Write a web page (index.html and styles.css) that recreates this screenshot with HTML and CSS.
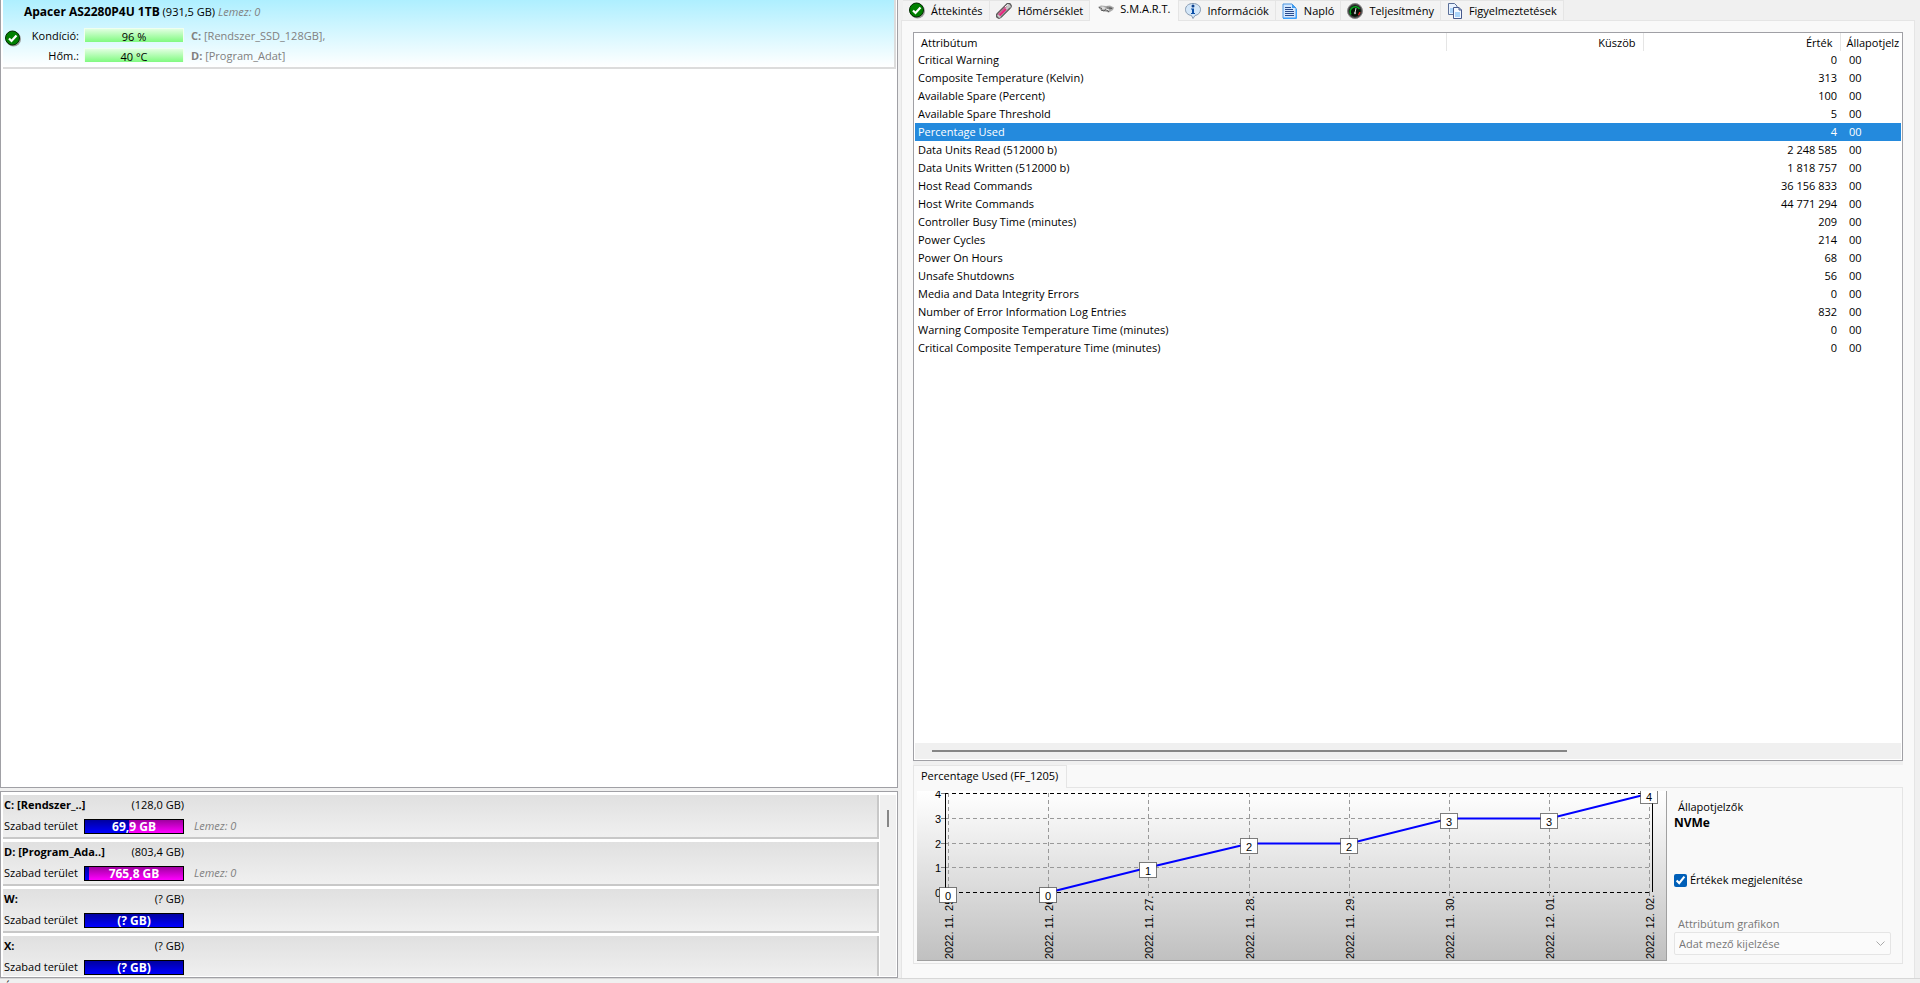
FILE: index.html
```
<!DOCTYPE html>
<html lang="hu">
<head>
    <meta charset="UTF-8">
    <meta name="viewport" content="width=device-width, initial-scale=1.0">
    <title>Apacer AS2280P4U 1TB - S.M.A.R.T.</title>
    <link rel="stylesheet" href="styles.css">
</head>
<body>
    <div class="main">
        <!-- Disks and partitions -->
        <aside class="sidebar">
            <div class="disk-list">
                <div class="disk">
                    <div class="disk-title"><b>Apacer AS2280P4U 1TB</b> <span>(931,5 GB)</span> <i>Lemez: 0</i></div>
                    <div class="disk-body">
                        <svg class="disk-status" width="16" height="17" viewBox="0 0 16 17">
                            <circle cx="8.500" cy="9" r="7.500" fill="#999"/>
                            <circle cx="7.500" cy="8" r="7" fill="#008000" stroke="#012b01"/>
                            <path d="M4 8.500l2.500 2.500 5-5.500" fill="none" stroke="#fff" stroke-width="2.200"/>
                        </svg>
                        <div class="disk-stats">
                            <div class="disk-stat">
                                <span class="disk-label">Kondíció:</span>
                                <span class="disk-bar">96 %</span>
                                <span class="disk-volume"><b>C:</b> [Rendszer_SSD_128GB],</span>
                            </div>
                            <div class="disk-stat">
                                <span class="disk-label">Hőm.:</span>
                                <span class="disk-bar">40 °C</span>
                                <span class="disk-volume"><b>D:</b> [Program_Adat]</span>
                            </div>
                        </div>
                    </div>
                </div>
            </div>

            <div class="partition-list">
                <div class="partitions">
                    <div class="partition">
                        <div class="partition-head"><b>C: [Rendszer_..]</b><span>(128,0 GB)</span></div>
                        <div class="partition-row">
                            <span class="partition-label">Szabad terület</span>
                            <span class="space-bar"><span class="space-used" style="width: 45%"></span><b>69,9 GB</b></span>
                            <i>Lemez: 0</i>
                        </div>
                    </div>
                    <div class="partition">
                        <div class="partition-head"><b>D: [Program_Ada..]</b><span>(803,4 GB)</span></div>
                        <div class="partition-row">
                            <span class="partition-label">Szabad terület</span>
                            <span class="space-bar"><span class="space-used" style="width: 4%"></span><b>765,8 GB</b></span>
                            <i>Lemez: 0</i>
                        </div>
                    </div>
                    <div class="partition">
                        <div class="partition-head"><b>W:</b><span>(? GB)</span></div>
                        <div class="partition-row">
                            <span class="partition-label">Szabad terület</span>
                            <span class="space-bar"><span class="space-used" style="width: 100%"></span><b>(? GB)</b></span>
                        </div>
                    </div>
                    <div class="partition">
                        <div class="partition-head"><b>X:</b><span>(? GB)</span></div>
                        <div class="partition-row">
                            <span class="partition-label">Szabad terület</span>
                            <span class="space-bar"><span class="space-used" style="width: 100%"></span><b>(? GB)</b></span>
                        </div>
                    </div>
                </div>
                <div class="scroll-v"><div class="scroll-v-thumb"></div></div>
            </div>
        </aside>

        <!-- Details of the selected disk -->
        <main class="details">
            <div class="tabs" role="tablist">
                <button class="tab" role="tab">
                    <svg width="16" height="17" viewBox="0 0 16 17">
                        <circle cx="8.500" cy="9" r="7.500" fill="#999"/>
                        <circle cx="7.500" cy="8" r="7" fill="#008000" stroke="#012b01"/>
                        <path d="M4 8.500l2.500 2.500 5-5.500" fill="none" stroke="#fff" stroke-width="2.200"/>
                    </svg>
                    Áttekintés
                </button>
                <button class="tab" role="tab">
                    <svg width="16" height="16" viewBox="0 0 16 16">
                        <path d="M3 12.500L12.500 3" stroke="#5a5a5a" stroke-width="6.500" stroke-linecap="round"/>
                        <path d="M3.500 12.500L12.500 3.500" stroke="#c8c8c8" stroke-width="4.500" stroke-linecap="round"/>
                        <path d="M2 11.500L10.500 3" stroke="#c06088" stroke-width="1.500"/>
                        <path d="M3.500 12.500L10 6" stroke="#e8207c" stroke-width="2"/>
                        <path d="M5 14L14 5" stroke="#666" stroke-width="1.200"/>
                        <path d="M9 4l3-2.500" stroke="#fff"/>
                    </svg>
                    Hőmérséklet
                </button>
                <button class="tab active" role="tab" aria-selected="true">
                    <svg width="16" height="16" viewBox="0 0 16 16">
                        <path d="M0 6l3-1.500 5 .5 4-.5 4 2-1 2.500-4 2.500-4-1-4-1z" fill="#aaa"/>
                        <path d="M1 6l4-.5 3 1.500-2 1.500-4-1z" fill="#ddd"/>
                        <path d="M9 5.500l4 .5 2 1.500-3 1-4-1z" fill="#888"/>
                        <path d="M3 9l3 1 2-1.500 3 2.500M1 6.500l3 1M11 7l3 .5" fill="none" stroke="#555"/>
                        <path d="M8 8l3 1" stroke="#eee"/>
                    </svg>
                    S.M.A.R.T.
                </button>
                <button class="tab" role="tab">
                    <svg width="16" height="16" viewBox="0 0 16 16">
                        <path d="M8 .5c4.500 0 7.500 2.600 7.500 6s-2.500 5.500-5.500 6l-2 3-1.500-3C3 12 .5 10 .5 6.500s3-6 7.500-6z" fill="#d3e6f8" stroke="#8599b0"/>
                        <circle cx="8" cy="3" r="1.500" fill="#0b3f8c"/>
                        <path d="M6 5.500h3v4.500h1v1H6v-1h1V6.500H6z" fill="#0b4fa8"/>
                    </svg>
                    Információk
                </button>
                <button class="tab" role="tab">
                    <svg width="16" height="16" viewBox="0 0 16 16">
                        <path d="M2 1h8l4 4v10H1V1z" fill="#d3e8ff" stroke="#4a94e0"/>
                        <path d="M10 1v4h4z" fill="#3f9cf0"/>
                        <path d="M3 4.500h6M3 6.500h8M3 8.500h9M3 10.500h9M3 12.500h9" stroke="#2a4a8c"/>
                        <path d="M1 15.500h13.500V6" fill="none" stroke="#38a0ff"/>
                    </svg>
                    Napló
                </button>
                <button class="tab" role="tab">
                    <svg width="16" height="16" viewBox="0 0 16 16">
                        <circle cx="8" cy="8" r="7.500" fill="#444" stroke="#888"/>
                        <circle cx="8" cy="8" r="5.800" fill="#061206"/>
                        <path d="M4 11.500A5 5 0 1 1 12.500 6" fill="none" stroke="#08a020" stroke-width="1.500"/>
                        <path d="M12.800 9a5 5 0 0 1-1.500 3" fill="none" stroke="#e02020" stroke-width="1.500"/>
                        <path d="M8 10l1-5" stroke="#ddd"/>
                        <circle cx="8" cy="10" r="1.200" fill="#aaa"/>
                    </svg>
                    Teljesítmény
                </button>
                <button class="tab" role="tab">
                    <svg width="16" height="16" viewBox="0 0 16 16">
                        <path d="M1.500.5h6l2.500 2.500v8.500H1.500z" fill="#e9f3ff" stroke="#5b6f98"/>
                        <path d="M3 5h4v5H3z" fill="#a9d4fa"/>
                        <path d="M6.500 4.500H12l2.500 2.500v8.500h-8z" fill="#f4f9ff" stroke="#46598c"/>
                        <path d="M12 4.500v2.500h2.500" fill="none" stroke="#46598c"/>
                        <path d="M8 9h5v5H8z" fill="#a9d4fa"/>
                    </svg>
                    Figyelmeztetések
                </button>
            </div>

            <div class="tab-page">
                <div class="smart-list">
                    <table class="smart-table">
                        <colgroup>
                            <col>
                            <col class="col-value">
                            <col class="col-value">
                            <col class="col-flags">
                        </colgroup>
                        <thead>
                            <tr><th>Attribútum</th><th>Küszöb</th><th>Érték</th><th>Állapotjelz</th></tr>
                        </thead>
                        <tbody>
                            <tr><td>Critical Warning</td><td></td><td>0</td><td>00</td></tr>
                            <tr><td>Composite Temperature (Kelvin)</td><td></td><td>313</td><td>00</td></tr>
                            <tr><td>Available Spare (Percent)</td><td></td><td>100</td><td>00</td></tr>
                            <tr><td>Available Spare Threshold</td><td></td><td>5</td><td>00</td></tr>
                            <tr class="selected"><td>Percentage Used</td><td></td><td>4</td><td>00</td></tr>
                            <tr><td>Data Units Read (512000 b)</td><td></td><td>2 248 585</td><td>00</td></tr>
                            <tr><td>Data Units Written (512000 b)</td><td></td><td>1 818 757</td><td>00</td></tr>
                            <tr><td>Host Read Commands</td><td></td><td>36 156 833</td><td>00</td></tr>
                            <tr><td>Host Write Commands</td><td></td><td>44 771 294</td><td>00</td></tr>
                            <tr><td>Controller Busy Time (minutes)</td><td></td><td>209</td><td>00</td></tr>
                            <tr><td>Power Cycles</td><td></td><td>214</td><td>00</td></tr>
                            <tr><td>Power On Hours</td><td></td><td>68</td><td>00</td></tr>
                            <tr><td>Unsafe Shutdowns</td><td></td><td>56</td><td>00</td></tr>
                            <tr><td>Media and Data Integrity Errors</td><td></td><td>0</td><td>00</td></tr>
                            <tr><td>Number of Error Information Log Entries</td><td></td><td>832</td><td>00</td></tr>
                            <tr><td>Warning Composite Temperature Time (minutes)</td><td></td><td>0</td><td>00</td></tr>
                            <tr><td>Critical Composite Temperature Time (minutes)</td><td></td><td>0</td><td>00</td></tr>
                        </tbody>
                    </table>
                    <div class="scroll-h"><div class="scroll-h-thumb"></div></div>
                </div>

                <div class="history">
                    <div class="history-tabs" role="tablist">
                        <button class="history-tab" role="tab" aria-selected="true">Percentage Used (FF_1205)</button>
                    </div>
                    <div class="history-page">
                        <div class="chart">
                            <svg id="chart" viewBox="0 0 749 169"></svg>
                        </div>
                        <div class="options">
                            <div class="options-title">Állapotjelzők</div>
                            <b>NVMe</b>
                            <label class="check"><input type="checkbox" checked>Értékek megjelenítése</label>
                            <label class="graph-label" for="graphType">Attribútum grafikon</label>
                            <div class="graph-select">
                                <select id="graphType" disabled>
                                    <option>Adat mező kijelzése</option>
                                </select>
                                <svg width="9" height="5" viewBox="0 0 9 5"><path d="M.5 .5l4 4 4-4" fill="none" stroke="#aaa"/></svg>
                            </div>
                        </div>
                    </div>
                </div>
            </div>
        </main>
    </div>

    <footer class="status-bar">Á</footer>

    <script src="chart.js"></script>
</body>
</html>
```
FILE: styles.css
```
* {
    box-sizing: border-box;
}

body {
    margin: 0;
    height: 100vh;
    display: flex;
    flex-direction: column;
    overflow: hidden;
    background-color: #f0f0f0;
    color: #000;
    font-family: "Open Sans", "Noto Sans", sans-serif;
    font-size: 11px;
    line-height: 16px;
}

button,
select {
    font: inherit;
    color: inherit;
}

i {
    color: #808080;
}

.main {
    flex: 1;
    min-height: 0;
    display: flex;
    gap: 3px;
}

/* Left side */
.sidebar {
    flex: 0 0 898px;
    max-width: 50%;
    display: flex;
    flex-direction: column;
    gap: 3px;
}

.disk-list {
    flex: 1;
    min-height: 0;
    padding: 0 1px 0 2px;
    background-color: #fff;
    border: 1px solid #a0a0a5;
    border-top: none;
}

.disk {
    height: 69px;
    padding-top: 4px;
    background: linear-gradient(#aeefff, #fff);
    border: 2px solid #dcdcdc;
    border-width: 0 2px 2px 0;
}

.disk-title {
    padding-left: 21px;
}

.disk-title b {
    font-size: 12px;
}

.disk-body {
    display: flex;
    align-items: flex-start;
    padding: 6px 0 0 2px;
}

.disk-status {
    margin-top: 4px;
}

.disk-stats {
    flex: 1;
}

.disk-stat {
    display: flex;
    line-height: 20px;
}

.disk-label {
    width: 58px;
    text-align: right;
}

.disk-bar {
    width: 100px;
    height: 14px;
    margin: 2px 7px 4px 5px;
    border: 1px solid #f0fff0;
    border-bottom: none;
    background: linear-gradient(#e0ffe0, #80fa80);
    line-height: 15px;
    text-align: center;
}

.disk-volume {
    color: #808080;
}

.partition-list {
    flex: 0 0 187px;
    display: flex;
    overflow: hidden;
    padding: 3px 1px 1px 2px;
    background-color: #fff;
    border: 1px solid #a0a0a5;
}

.partitions {
    flex: 1;
    display: flex;
    flex-direction: column;
    gap: 3px;
    overflow: hidden;
}

.partition {
    flex: 0 0 44px;
    padding: 2px 0 0 1px;
    background: linear-gradient(#e0e0e0, #f0f0f0);
    border: 2px solid #c8c8c8;
    border-width: 0 2px 2px 0;
}

.partition-head {
    display: flex;
    justify-content: space-between;
    width: 180px;
}

.partition-row {
    display: flex;
    align-items: center;
    padding-top: 5px;
}

.partition-row i {
    margin-left: 10px;
}

.partition-label {
    width: 80px;
    white-space: nowrap;
}

.space-bar {
    position: relative;
    width: 100px;
    height: 15px;
    border: 1px solid #000;
    background: linear-gradient(#a000a0, #ff00ff);
    color: #fff;
    font-size: 12px;
    line-height: 14px;
    text-align: center;
}

.space-used {
    position: absolute;
    top: 0;
    left: 0;
    height: 100%;
    background: linear-gradient(#0000a0, #0000ff);
}

.space-bar b {
    position: relative;
}

.scroll-v {
    width: 16px;
    margin-left: 1px;
    padding: 15px 7px 0;
    background-color: #f0f0f0;
}

.scroll-v-thumb {
    width: 2px;
    height: 17px;
    background-color: #868686;
}

/* Right side */
.details {
    flex: 1;
    min-width: 0;
    display: flex;
    flex-direction: column;
    padding-right: 5px;
}

.tabs {
    display: flex;
    height: 20px;
    padding-left: 2px;
}

.tab {
    display: flex;
    align-items: center;
    gap: 6px;
    padding: 0 6px 0 6px;
    background-color: #f3f3f3;
    border: 1px solid #e5e5e5;
    border-width: 1px 1px 0 0;
    white-space: nowrap;
}

.tab.active {
    height: 21px;
    margin-bottom: -1px;
    padding: 0 8px 4px 8px;
    background-color: #f9f9f9;
    border-top: none;
    z-index: 1;
}

.tab-page {
    flex: 1;
    min-height: 0;
    display: flex;
    flex-direction: column;
    padding: 11px 11px 14px;
    background-color: #f9f9f9;
    border: 1px solid #e5e5e5;
    border-bottom: none;
}

.smart-list {
    flex: 1;
    min-height: 0;
    display: flex;
    flex-direction: column;
    justify-content: space-between;
    padding: 0 1px 1px;
    background-color: #fff;
    border: 1px solid #a0a0a5;
}

.smart-table {
    width: 100%;
    table-layout: fixed;
    border-collapse: collapse;
}

.col-value {
    width: 197px;
}

.col-flags {
    width: 61px;
}

.smart-table th {
    height: 18px;
    padding: 1px 7px 0 6px;
    border-right: 1px solid #e5e5e5;
    font-weight: normal;
    text-align: left;
    white-space: nowrap;
}

.smart-table th:last-child {
    padding-right: 0;
    border-right: none;
}

.smart-table td {
    height: 18px;
    padding: 0 3px;
    white-space: nowrap;
}

.smart-table th:nth-child(2),
.smart-table th:nth-child(3),
.smart-table td:nth-child(3) {
    text-align: right;
}

.smart-table td:last-child {
    padding-left: 9px;
}

.smart-table .selected {
    background-color: #248add;
    color: #fff;
}

.scroll-h {
    height: 16px;
    padding: 7px 17px;
    background-color: #f0f0f0;
}

.scroll-h-thumb {
    width: calc(100% * 2 / 3);
    height: 2px;
    background-color: #868686;
}

.history {
    border-top: 4px solid #f0f0f0;
}

.history-tabs {
    display: flex;
    height: 22px;
}

.history-tab {
    height: 23px;
    padding: 0 8px 2px 7px;
    background-color: #f9f9f9;
    border: 1px solid #e5e5e5;
    border-bottom: none;
    z-index: 1;
}

.history-page {
    display: flex;
    padding: 3px 11px 2px 3px;
    border: 1px solid #e5e5e5;
}

.chart {
    flex: 1;
    border: 1px solid #a0a0a0;
    border-width: 0 1px 1px 0;
    background: linear-gradient(#fff, #c0c0c0);
}

.chart svg {
    display: block;
    width: 100%;
    font-family: "Liberation Sans", Arial, sans-serif;
    font-size: 11px;
}

.options {
    width: 224px;
    padding: 8px 0 0 7px;
    display: flex;
    flex-direction: column;
}

.options-title {
    padding-left: 4px;
}

.options b {
    font-size: 12px;
}

.check {
    display: flex;
    align-items: center;
    gap: 3px;
    margin: 41px 0 28px;
}

.check input {
    width: 13px;
    height: 13px;
    margin: 0;
    accent-color: #005fb8;
}

.graph-label {
    padding-left: 4px;
    color: #777;
}

.graph-select {
    display: flex;
    align-items: center;
    height: 23px;
    padding: 0 5px 0 4px;
    background-color: #fbfbfb;
    border: 1px solid #e5e5e5;
    border-radius: 2px;
}

.graph-select select {
    flex: 1;
    padding: 0;
    appearance: none;
    background: none;
    border: none;
    color: #777;
    opacity: 1;
}

.status-bar {
    height: 5px;
    padding-left: 4px;
    overflow: hidden;
    border-top: 1px solid #d7d7d7;
}
```
FILE: chart.js
```
// Attribute history
const points = [
    { date: '2022. 11. 25.', value: 0 },
    { date: '2022. 11. 26.', value: 0 },
    { date: '2022. 11. 27.', value: 1 },
    { date: '2022. 11. 28.', value: 2 },
    { date: '2022. 11. 29.', value: 2 },
    { date: '2022. 11. 30.', value: 3 },
    { date: '2022. 12. 01.', value: 3 },
    { date: '2022. 12. 02.', value: 4 }
];

const plot = { left: 28, right: 735, top: 2, bottom: 101 };
const maxValue = 4;

function getX(index) {
    return Math.round(31 + index * 100.2) + 0.5;
}

function getY(value) {
    return Math.round(plot.bottom - value * (plot.bottom - plot.top) / maxValue) + 0.5;
}

function drawChart() {
    let html = '';

    // Horizontal grid and value axis
    for (let v = 0; v <= maxValue; v++) {
        const y = getY(v);
        const color = v === 0 || v === maxValue ? '#000' : '#999';
        html += `<path d="M${plot.left} ${y}H${plot.right}" stroke="${color}" stroke-dasharray="4 3"/>`;
        html += `<path d="M${plot.left - 4} ${y}h4" stroke="#808080"/>`;
        html += `<text x="${plot.left - 4}" y="${y + 4}" text-anchor="end">${v}</text>`;
    }

    // Vertical grid and dates
    points.forEach((point, i) => {
        const x = getX(i);
        html += `<path d="M${x} ${plot.top}V${plot.bottom}" stroke="#999" stroke-dasharray="4 3"/>`;
        html += `<path d="M${x} ${plot.bottom}v4" stroke="#808080"/>`;
        html += `<text transform="translate(${x + 4} 168) rotate(-90)">${point.date}</text>`;
    });

    html += `<path d="M${plot.left + 0.5} ${plot.top}V${plot.bottom}M${plot.right + 0.5} ${plot.top}V${plot.bottom}" stroke="#000"/>`;

    const line = points.slice(1).map((point, i) => `${getX(i + 1)},${getY(point.value)}`).join(' ');
    html += `<polyline points="${line}" fill="none" stroke="#0000ff" stroke-width="2"/>`;

    // Value marks
    points.forEach((point, i) => {
        const x = getX(i);
        const y = getY(point.value) + 3;
        html += `<rect x="${x - 9}" y="${y - 8}" width="17" height="15" fill="#fff" stroke="#000" stroke-dasharray="1 1"/>`;
        html += `<text x="${x - 0.5}" y="${y + 4}" text-anchor="middle">${point.value}</text>`;
    });

    document.getElementById('chart').innerHTML = html;
}

drawChart();
```
